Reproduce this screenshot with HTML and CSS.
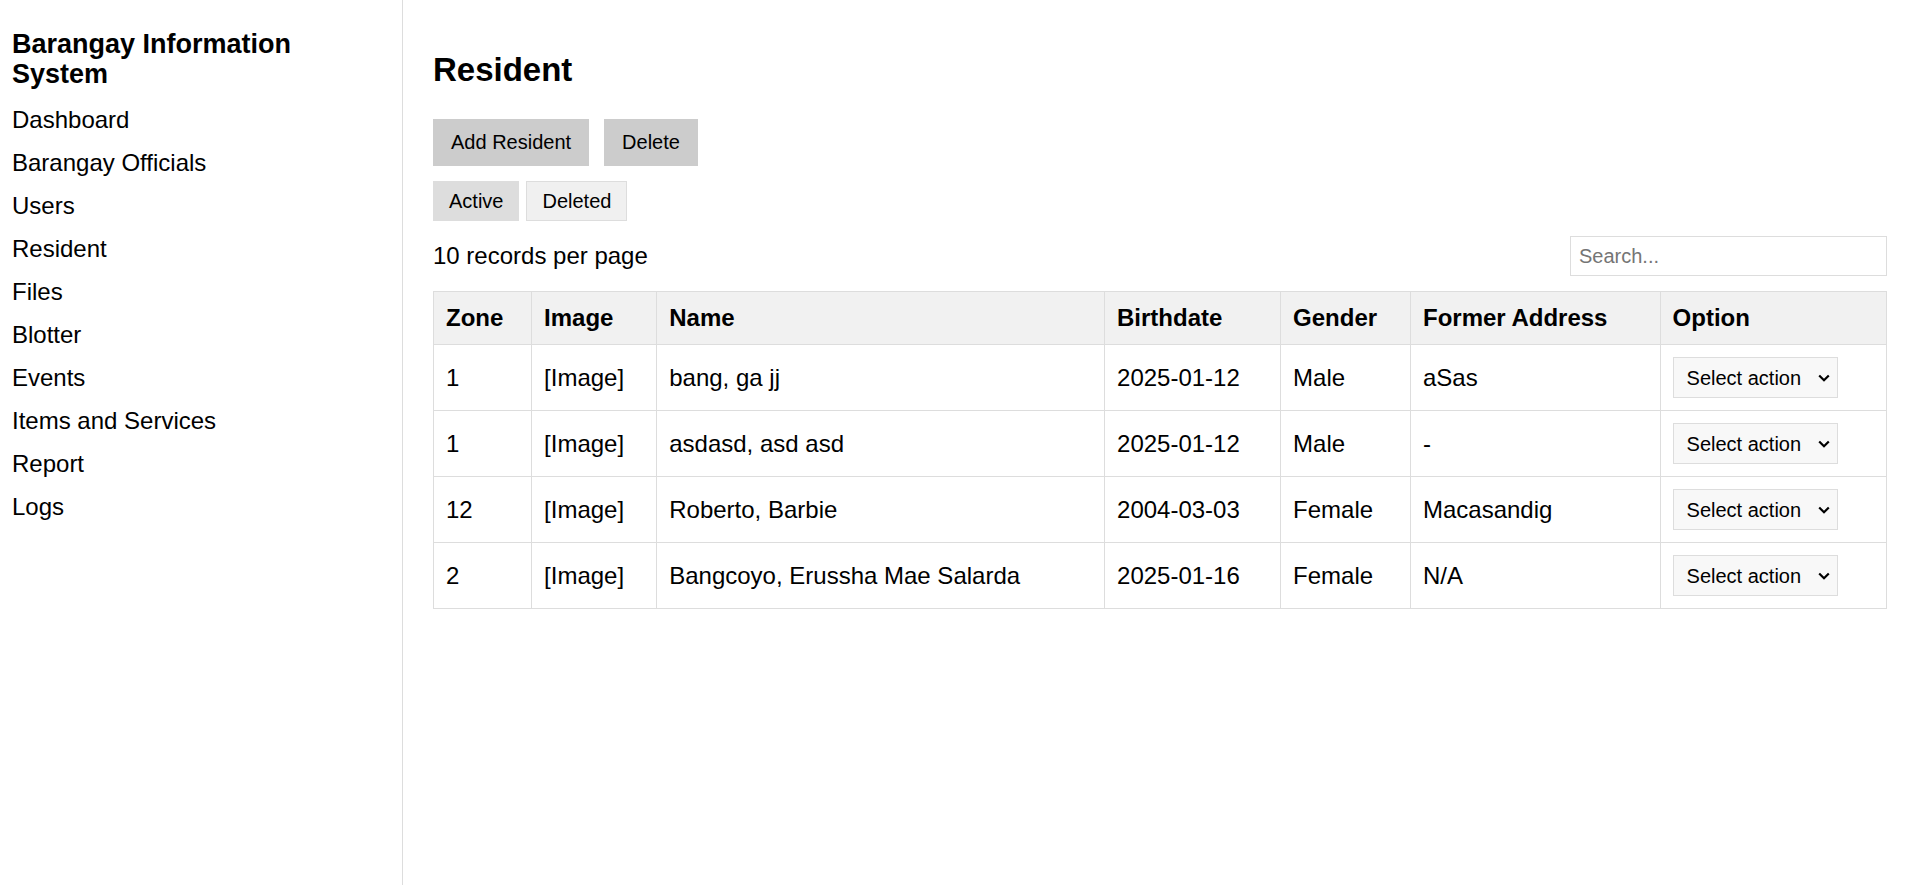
FILE: index.html
```html
<!DOCTYPE html>
<html lang="en">
<head>
<meta charset="utf-8">
<title>Resident - Barangay Information System</title>
<link rel="stylesheet" href="styles.css">
</head>
<body>
<div class="layout">
  <aside class="sidebar">
    <h2 class="brand">Barangay Information System</h2>
    <nav class="nav">
      <a href="#" class="nav-link">Dashboard</a>
      <a href="#" class="nav-link">Barangay Officials</a>
      <a href="#" class="nav-link">Users</a>
      <a href="#" class="nav-link">Resident</a>
      <a href="#" class="nav-link">Files</a>
      <a href="#" class="nav-link">Blotter</a>
      <a href="#" class="nav-link">Events</a>
      <a href="#" class="nav-link">Items and Services</a>
      <a href="#" class="nav-link">Report</a>
      <a href="#" class="nav-link">Logs</a>
    </nav>
  </aside>
  <main class="main">
    <h1 class="page-title">Resident</h1>
    <div class="actions">
      <button class="btn">Add Resident</button>
      <button class="btn">Delete</button>
    </div>
    <div class="tabs">
      <button class="tab tab-active">Active</button>
      <button class="tab">Deleted</button>
    </div>
    <div class="toolbar">
      <span class="per-page">10 records per page</span>
      <input class="search" type="text" placeholder="Search...">
    </div>
    <table class="data-table">
      <thead>
        <tr>
          <th>Zone</th>
          <th>Image</th>
          <th>Name</th>
          <th>Birthdate</th>
          <th>Gender</th>
          <th>Former Address</th>
          <th>Option</th>
        </tr>
      </thead>
      <tbody>
        <tr>
          <td>1</td>
          <td>[Image]</td>
          <td>bang, ga jj</td>
          <td>2025-01-12</td>
          <td>Male</td>
          <td>aSas</td>
          <td><select class="action-select"><option>Select action</option><option>View</option><option>Edit</option><option>Delete</option></select></td>
        </tr>
        <tr>
          <td>1</td>
          <td>[Image]</td>
          <td>asdasd, asd asd</td>
          <td>2025-01-12</td>
          <td>Male</td>
          <td>-</td>
          <td><select class="action-select"><option>Select action</option><option>View</option><option>Edit</option><option>Delete</option></select></td>
        </tr>
        <tr>
          <td>12</td>
          <td>[Image]</td>
          <td>Roberto, Barbie</td>
          <td>2004-03-03</td>
          <td>Female</td>
          <td>Macasandig</td>
          <td><select class="action-select"><option>Select action</option><option>View</option><option>Edit</option><option>Delete</option></select></td>
        </tr>
        <tr>
          <td>2</td>
          <td>[Image]</td>
          <td>Bangcoyo, Erussha Mae Salarda</td>
          <td>2025-01-16</td>
          <td>Female</td>
          <td>N/A</td>
          <td><select class="action-select"><option>Select action</option><option>View</option><option>Edit</option><option>Delete</option></select></td>
        </tr>
      </tbody>
    </table>
  </main>
</div>
</body>
</html>
```

FILE: styles.css
```css
* { box-sizing: border-box; }

html, body {
  margin: 0;
  padding: 0;
  height: 100%;
}

body {
  font-family: "Liberation Sans", Arial, sans-serif;
  color: #000;
  background: #fff;
}

.layout {
  display: flex;
  min-height: 100vh;
}

.sidebar {
  width: 403px;
  flex: 0 0 403px;
  padding: 29px 12px;
  border-right: 1px solid #dddddd;
}

.brand {
  margin: 0 0 9px;
  font-size: 27px;
  line-height: 30px;
  font-weight: bold;
}

.nav {
  display: flex;
  flex-direction: column;
}

.nav-link {
  display: block;
  font-size: 24px;
  line-height: 27px;
  padding: 8px 0;
  color: #000;
  text-decoration: none;
}

.main {
  flex: 1;
  min-width: 0;
  padding: 51px 18px 0 30px;
}

.page-title {
  margin: 0 0 30px;
  font-size: 33px;
  font-weight: bold;
}

.actions {
  display: flex;
  gap: 15px;
  margin-bottom: 15px;
}

.btn {
  font-family: inherit;
  font-size: 20px;
  line-height: 23px;
  padding: 12px 18px;
  border: none;
  background: #cccccc;
  color: #000;
  border-radius: 0;
}

.tabs {
  display: flex;
  gap: 7px;
  margin-bottom: 15px;
}

.tab {
  font-family: inherit;
  font-size: 20px;
  line-height: 22px;
  padding: 8px 15px;
  border: 1px solid #dddddd;
  background: #f0f0f0;
  color: #000;
  border-radius: 0;
}

.tab-active {
  background: #dddddd;
  border-color: #dddddd;
}

.toolbar {
  display: flex;
  justify-content: space-between;
  align-items: center;
  margin-bottom: 15px;
}

.per-page {
  font-size: 24px;
}

.search {
  width: 317px;
  height: 40px;
  padding: 0 8px;
  font-family: inherit;
  font-size: 20px;
  border: 1px solid #dddddd;
  border-radius: 0;
  outline: none;
}

.search::placeholder {
  color: #757575;
}

.data-table {
  width: 100%;
  border-collapse: collapse;
  border: 1px solid #dddddd;
  font-size: 24px;
}

.data-table th,
.data-table td {
  border: 1px solid #dddddd;
  padding: 12px;
  text-align: left;
  vertical-align: middle;
}

.data-table th {
  background: #f1f1f1;
  font-weight: bold;
}

.action-select {
  -webkit-appearance: none;
  appearance: none;
  font-family: inherit;
  font-size: 20px;
  height: 41px;
  padding: 0 35px 0 13px;
  border: 1px solid #dddddd;
  border-radius: 0;
  background-color: #f8f8f8;
  background-image: url("data:image/svg+xml,%3Csvg xmlns='http://www.w3.org/2000/svg' width='12' height='8' viewBox='0 0 12 8'%3E%3Cpath d='M1.2 1.5l4.8 4.8 4.8-4.8' fill='none' stroke='%23000' stroke-width='2.2'/%3E%3C/svg%3E");
  background-repeat: no-repeat;
  background-position: right 7px center;
  background-size: 12px 8px;
  color: #000;
}
```
